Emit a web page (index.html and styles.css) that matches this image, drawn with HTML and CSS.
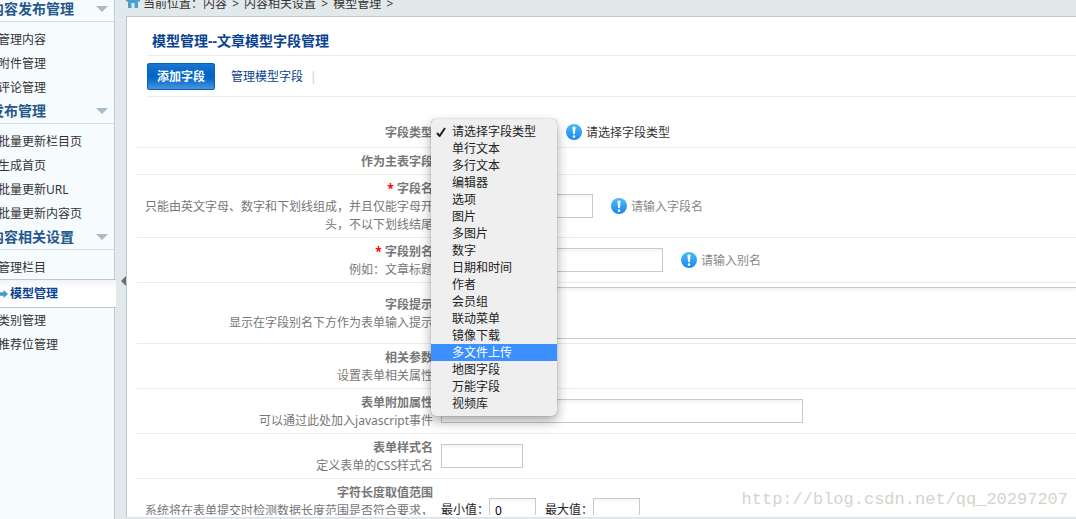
FILE: index.html
```html
<!DOCTYPE html>
<html lang="zh-CN">
<head>
<meta charset="utf-8">
<title>模型管理</title>
<link rel="stylesheet" href="styles.css">
</head>
<body>
<svg class="defs" aria-hidden="true">
  <defs>
    <linearGradient id="blue" x1="0" y1="0" x2="0" y2="1">
      <stop offset="0" stop-color="#49bdf8"/><stop offset="1" stop-color="#1a86f0"/>
    </linearGradient>
    <symbol id="info" viewBox="0 0 16 16">
      <circle cx="8" cy="8" r="8" fill="url(#blue)"/>
      <path d="M6.400 3Q8 2 9.600 3L8.900 9.800Q8 10.600 7.100 9.800Z" fill="#fff"/>
      <circle cx="8" cy="12.600" r="1.300" fill="#fff"/>
    </symbol>
  </defs>
</svg>
<div class="app">
  <aside class="sidebar">
    <nav class="menu">
      <h3 class="menu-title">内容发布管理</h3>
      <ul class="menu-list">
        <li><a href="#">管理内容</a></li>
        <li><a href="#">附件管理</a></li>
        <li><a href="#">评论管理</a></li>
      </ul>
      <h3 class="menu-title">发布管理</h3>
      <ul class="menu-list">
        <li><a href="#">批量更新栏目页</a></li>
        <li><a href="#">生成首页</a></li>
        <li><a href="#">批量更新URL</a></li>
        <li><a href="#">批量更新内容页</a></li>
      </ul>
      <h3 class="menu-title">内容相关设置</h3>
      <ul class="menu-list">
        <li><a href="#">管理栏目</a></li>
        <li class="current"><a href="#"><svg class="arrow" viewBox="0 0 8 8" aria-hidden="true"><path d="M0 2.300H3.500V0L8 4L3.500 8V5.700H0Z" fill="#3a9bd0"/></svg>模型管理</a></li>
        <li><a href="#">类别管理</a></li>
        <li><a href="#">推荐位管理</a></li>
      </ul>
    </nav>
  </aside>
  <div class="gutter">
    <button class="collapse" type="button" aria-label="收起菜单"></button>
  </div>
  <div class="content">
    <div class="crumbs">
      <svg class="home" viewBox="0 0 14 14" aria-hidden="true"><path d="M7 0L14 6V7.500H12V14H8.500V9H5.500V14H2V7.500H0V6Z" fill="#4a9fcf"/></svg>
      <p class="path">当前位置：内容 <span class="sep">&gt;</span> 内容相关设置 <span class="sep">&gt;</span> 模型管理 <span class="sep">&gt;</span></p>
    </div>
    <main class="panel">
      <header class="head">
        <h1 class="title">模型管理--文章模型字段管理</h1>
        <div class="tabs">
          <button class="tab-on" type="button">添加字段</button>
          <a class="tab" href="#">管理模型字段</a>
          <span class="bar">|</span>
        </div>
      </header>
      <form class="form">
        <div class="row">
          <label class="label" for="type"><b>字段类型</b></label>
          <div class="field">
            <div class="picker">
              <select class="select" id="type"><option>请选择字段类型</option></select>
              <ul class="popup" role="listbox" aria-label="字段类型">
                <li role="option" aria-selected="true"><svg class="check" viewBox="0 0 10 10" aria-hidden="true"><path d="M1 6L3.600 9L9 1" fill="none" stroke="#222" stroke-width="2"/></svg>请选择字段类型</li>
                <li role="option">单行文本</li>
                <li role="option">多行文本</li>
                <li role="option">编辑器</li>
                <li role="option">选项</li>
                <li role="option">图片</li>
                <li role="option">多图片</li>
                <li role="option">数字</li>
                <li role="option">日期和时间</li>
                <li role="option">作者</li>
                <li role="option">会员组</li>
                <li role="option">联动菜单</li>
                <li role="option">镜像下载</li>
                <li role="option" class="active">多文件上传</li>
                <li role="option">地图字段</li>
                <li role="option">万能字段</li>
                <li role="option">视频库</li>
              </ul>
            </div>
            <span class="tip dark"><svg class="info"><use href="#info"/></svg>请选择字段类型</span>
          </div>
        </div>
        <div class="row">
          <div class="label"><b>作为主表字段</b></div>
          <div class="field"></div>
        </div>
        <div class="row">
          <label class="label" for="name"><b><i class="req">*</i> 字段名</b><br>只能由英文字母、数字和下划线组成，并且仅能字母开头，不以下划线结尾</label>
          <div class="field">
            <input class="input w-name" id="name" type="text">
            <span class="tip"><svg class="info"><use href="#info"/></svg>请输入字段名</span>
          </div>
        </div>
        <div class="row">
          <label class="label" for="alias"><b><i class="req">*</i> 字段别名</b><br>例如：文章标题</label>
          <div class="field">
            <input class="input w-alias" id="alias" type="text">
            <span class="tip"><svg class="info"><use href="#info"/></svg>请输入别名</span>
          </div>
        </div>
        <div class="row">
          <label class="label" for="hint"><b>字段提示</b><br>显示在字段别名下方作为表单输入提示</label>
          <div class="field"><textarea class="input area" id="hint"></textarea></div>
        </div>
        <div class="row">
          <div class="label"><b>相关参数</b><br>设置表单相关属性</div>
          <div class="field"></div>
        </div>
        <div class="row">
          <label class="label" for="attr"><b>表单附加属性</b><br>可以通过此处加入javascript事件</label>
          <div class="field"><input class="input w-attr" id="attr" type="text"></div>
        </div>
        <div class="row">
          <label class="label" for="css"><b>表单样式名</b><br>定义表单的CSS样式名</label>
          <div class="field"><input class="input w-css" id="css" type="text"></div>
        </div>
        <div class="row">
          <div class="label"><b>字符长度取值范围</b><br>系统将在表单提交时检测数据长度范围是否符合要求，如果不想限制长度请留空</div>
          <div class="field range">
            <label for="min">最小值：</label><input class="input w-num" id="min" type="text" value="0">
            <label class="max" for="max">最大值：</label><input class="input w-num" id="max" type="text">
          </div>
        </div>
      </form>
    </main>
  </div>
</div>
<div class="watermark">http://blog.csdn.net/qq_20297207</div>
</body>
</html>
```

FILE: styles.css
```css
* { box-sizing: border-box; }
body {
  margin: 0;
  font: 12px/18px "Noto Sans", "Noto Sans CJK SC", sans-serif;
  color: #333;
  background: #e2e9ea;
}
ul { list-style: none; margin: 0; padding: 0; }
a { text-decoration: none; color: inherit; }
input, textarea, select, button { font: inherit; margin: 0; }
.defs { position: absolute; width: 0; height: 0; }
.app { display: flex; height: 100vh; overflow: hidden; }

.sidebar {
  flex: 0 0 116px;
  overflow: hidden;
  background: linear-gradient(to left, #e9eff1 1px, #b9c9d3 1px, #b9c9d3 2px, #f6fbfd 2px);
}
.menu { margin: -3px 0 0 -20px; }
.menu-title {
  display: flex;
  align-items: center;
  justify-content: space-between;
  height: 25px;
  margin: 0 2px 0 0;
  padding: 0 6px 0 10px;
  border-bottom: 1px solid #cfdde5;
  font-size: 14px;
  line-height: 24px;
  color: #25568c;
  white-space: nowrap;
}
.menu-title::after {
  content: "";
  border: 6px solid transparent;
  border-top-color: #a9bcc6;
  border-bottom: 0;
}
.menu-list { padding-top: 5px; }
.menu-list a { display: block; padding: 2px 0 0 18px; line-height: 22px; white-space: nowrap; }
.menu-list .current {
  border: solid #b9c9d3;
  border-width: 1px 0;
  background: linear-gradient(#f1f3f4, #fff 8px);
  font-weight: bold;
  color: #0a4291;
}
.menu-list .current a { display: flex; align-items: center; gap: 2px; padding: 1px 0 0 20px; line-height: 26px; }
.arrow { width: 8px; height: 8px; }

.gutter { flex: 0 0 10px; display: flex; align-items: center; justify-content: flex-end; padding-top: 42px; }
.collapse {
  width: 0;
  height: 0;
  padding: 0;
  border: 5px solid transparent;
  border-right-color: #6a6f72;
  border-left: 0;
  background: none;
}

.content { flex: 1; min-width: 0; display: flex; flex-direction: column; padding-bottom: 1px; }
.crumbs { flex: 0 0 16px; display: flex; gap: 3px; align-items: flex-end; overflow: hidden; line-height: 24px; white-space: nowrap; }
.path { margin: 0; }
.sep { margin: 0 2px; }
.home { flex: none; width: 14px; height: 14px; margin-bottom: 8px; }
.panel {
  flex: 1;
  min-height: 0;
  display: flex;
  flex-direction: column;
  overflow: hidden;
  padding-bottom: 2px;
  background: #fff;
  border: 1px solid #b9c9d3;
  border-right: 0;
  border-bottom-color: #dfe3e4;
}
.head { flex: none; padding: 10px 0 0 20px; }
.title {
  margin: 0;
  padding-left: 5px;
  border-bottom: 1px solid #ebebeb;
  font-size: 14px;
  line-height: 28px;
  color: #0a4291;
}
.tabs { display: flex; align-items: center; height: 41px; border-bottom: 1px solid #ebebeb; }
.tab-on {
  width: 68px;
  height: 27px;
  padding: 2px 0 0;
  border: 1px solid #0464c0;
  border-radius: 2px;
  background: linear-gradient(#1a75cf, #0067c9 40%, #0067c9 55%, #4a93db);
  color: #fff;
  font-weight: bold;
}
.tab { margin-left: 16px; padding-top: 2px; color: #0a4291; }
.bar { margin-left: 7px; padding-top: 2px; color: #ccc; }

.form { flex: 1; min-height: 0; overflow: hidden; padding: 20px 0 0 10px; }
.row { display: flex; align-items: center; padding: 4px 0; border-bottom: 1px solid #ebebeb; }
.label { flex: 0 0 300px; margin: 1px 0 -1px; padding: 0 4px; text-align: right; color: #777; }
.req { color: #f00; font-style: normal; }
.field { flex: 1; min-width: 0; display: flex; align-items: center; padding-left: 4px; }
.input {
  height: 24px;
  padding: 0 5px;
  border: 1px solid #c9c9c9;
  border-radius: 0;
  background: linear-gradient(#f4f4f4, #fff 4px);
  color: #000;
}
.w-name { width: 152px; }
.w-alias { width: 222px; }
.w-attr { width: 362px; }
.w-css { width: 82px; }
.w-num { width: 47px; }
.area { flex: 0 0 700px; height: 52px; resize: none; }
.range { color: #222; }
.max { margin-left: 9px; }
.tip { display: flex; align-items: center; gap: 4px; margin-left: 18px; padding-top: 2px; color: #888; }
.dark { color: #333; }
.info { width: 16px; height: 16px; margin-top: -2px; }

.picker { position: relative; display: flex; }
.select { width: 107px; height: 22px; border: 1px solid #c9c9c9; background: #fff; }
.popup {
  position: absolute;
  top: -2px;
  left: -10px;
  z-index: 2;
  width: 126px;
  padding: 4px 0;
  border-radius: 5px;
  background: #efefef;
  box-shadow: 0 0 1px rgba(0, 0, 0, .5), 0 5px 12px rgba(0, 0, 0, .35);
  color: #222;
}
.popup li { display: flex; align-items: center; padding-left: 21px; line-height: 17px; height: 17px; }
.popup .active { background: #3b8fff; color: #fff; }
.check { width: 10px; height: 10px; margin: 0 6px 0 -16px; }

.watermark {
  position: absolute;
  right: 8px;
  bottom: 7px;
  font: 17px/24px "Liberation Mono", monospace;
  color: #d4d4cc;
}
```
